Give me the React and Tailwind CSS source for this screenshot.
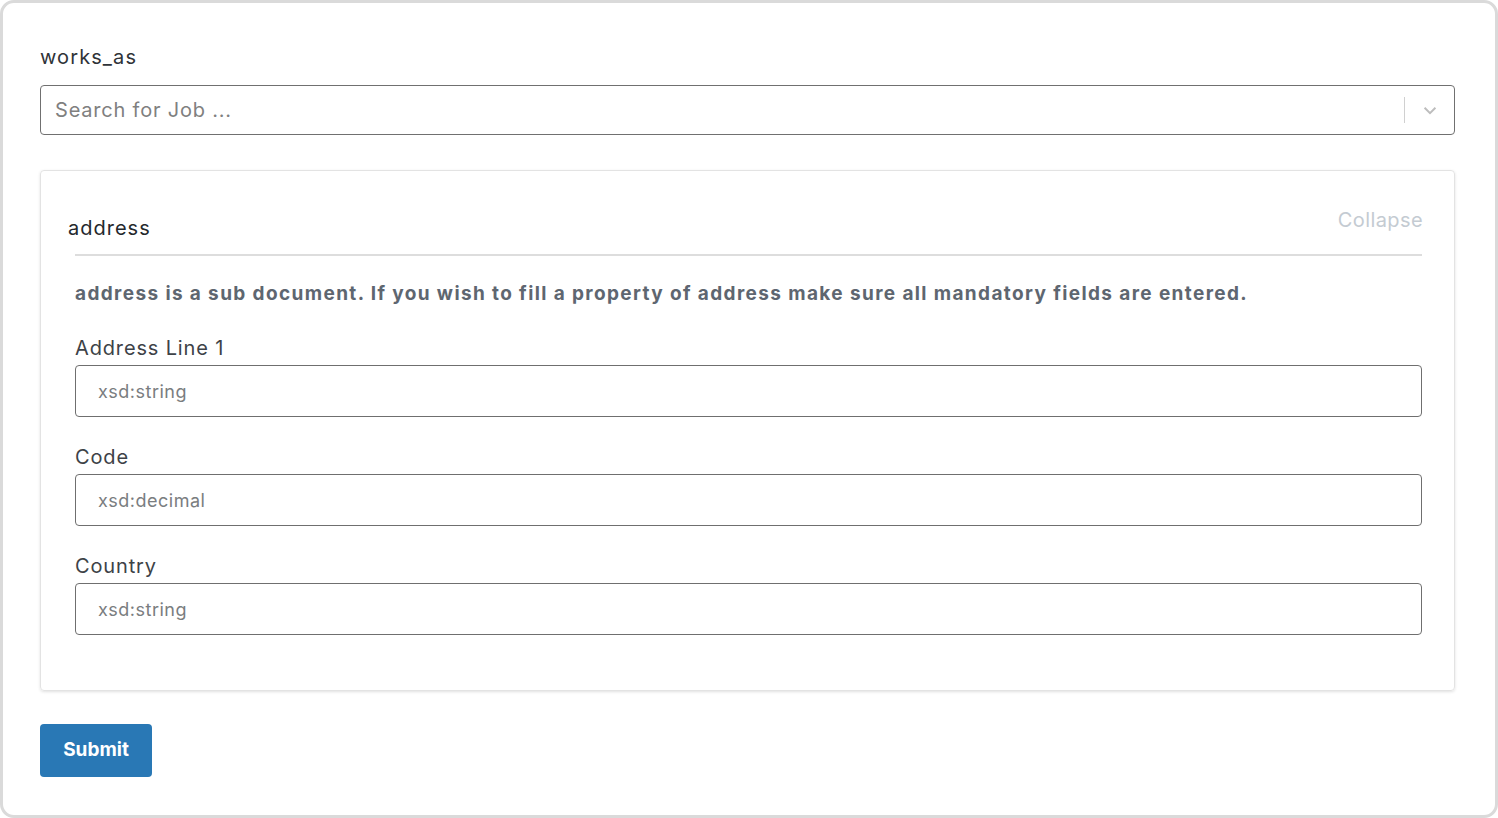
import React from 'react';

function Field({ label, placeholder, first }) {
    return (
        <div className={first ? 'mt-[27px]' : 'mt-[26px]'}>
            <p className="text-[20px] leading-[28px] tracking-[0.85px] text-[#3d4247]">{label}</p>
            <div className="mt-[3px] h-[52px] rounded-[4px] border-[1.5px] border-[#6f6f6f] flex items-center pl-[22px]">
                <span className="text-[18px] tracking-[0.5px] text-[#7a7d80]">{placeholder}</span>
            </div>
        </div>
    );
}

function App() {
    return (
        <div
            className="w-[1498px] h-[818px] bg-white border-[3px] border-[#dadada] rounded-[14px] overflow-hidden"
            style={{ fontFamily: 'Inter, "Noto Sans", sans-serif' }}
        >
            <div className="w-[1415px] ml-[37px] pt-[40px]">
                {/* works_as */}
                <p className="text-[20px] leading-[28px] tracking-[1.1px] text-[#2f3338]">works_as</p>
                <div className="mt-[14px] h-[50px] rounded-[4px] border-[1.5px] border-[#707070] flex items-center">
                    <span className="flex-1 pl-[14px] text-[20px] tracking-[0.8px] text-[#80807f]">Search for Job ...</span>
                    <div className="w-[1px] h-[26px] bg-[#d0d0d0]"></div>
                    <div className="w-[49px] flex justify-center">
                        <svg width="18" height="18" viewBox="0 0 20 20" fill="none" stroke="#bdbdbd" strokeWidth="2.2">
                            <path d="M4 7.5l6 6 6-6" />
                        </svg>
                    </div>
                </div>

                {/* address card */}
                <div className="mt-[35px] h-[521px] rounded-[4px] border border-[#e3e3e3] shadow-[0_1px_3px_rgba(0,0,0,0.12)]">
                    <div className="flex justify-between items-start pt-[35px] pl-[27px] pr-[31px]">
                        <p className="pt-[8px] text-[20px] leading-[28px] tracking-[1px] text-[#24282c]">address</p>
                        <button className="text-[20px] leading-[28px] tracking-[0.4px] text-[#c4cbd2]">Collapse</button>
                    </div>
                    <div className="pl-[34px] pr-[32px]">
                        <div className="mt-[12px] h-[2px] bg-[#dddddd]"></div>
                        <p className="mt-[25px] text-[19px] leading-[26px] tracking-[1.38px] font-bold text-[#5e6670]">
                            address is a sub document. If you wish to fill a property of address make sure all mandatory fields are entered.
                        </p>
                        <Field label="Address Line 1" placeholder="xsd:string" first />
                        <Field label="Code" placeholder="xsd:decimal" />
                        <Field label="Country" placeholder="xsd:string" />
                    </div>
                </div>

                <button className="mt-[33px] w-[112px] h-[53px] rounded-[4px] bg-[#2978b5] text-white text-[19px] font-bold">
                    Submit
                </button>
            </div>
        </div>
    );
}

export default App;
